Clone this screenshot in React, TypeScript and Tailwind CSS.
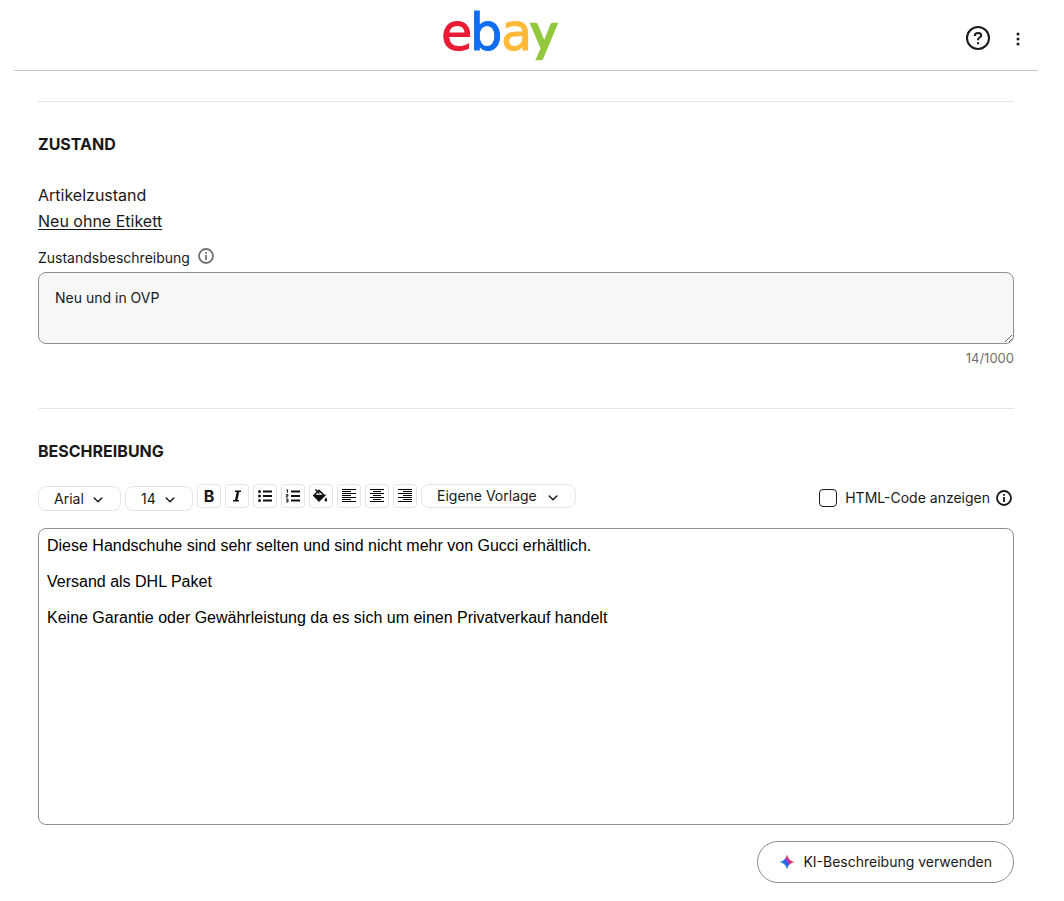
import React from "react";
import clsx from "clsx";

const DESCRIPTION = [
  "Diese Handschuhe sind sehr selten und sind nicht mehr von Gucci erhältlich.",
  "Versand als DHL Paket",
  "Keine Garantie oder Gewährleistung da es sich um einen Privatverkauf handelt",
].join("\n\n");

const MAX_CONDITION = 1000;

export default function App() {
  return (
    <div className="bg-white pr-[26px] pb-4 pl-[14px] font-['Inter',sans-serif] text-[#191919]">
      <Header />
      <main className="px-6">
        <ConditionSection />
        <DescriptionSection />
      </main>
    </div>
  );
}

function Header() {
  return (
    <header className="grid h-[71px] grid-cols-[1fr_auto_1fr] items-center border-b border-[#c7c7c7]">
      <a href="#" className="col-start-2 mr-12 block" aria-label="eBay">
        <Logo />
      </a>
      <div className="flex items-center justify-end gap-5 pt-1.5 pr-3">
        <button type="button" aria-label="Hilfe"><HelpIcon /></button>
        <button type="button" aria-label="Mehr" className="w-4 pt-0.5"><KebabIcon /></button>
      </div>
    </header>
  );
}

function ConditionSection() {
  const [text, setText] = React.useState("Neu und in OVP");

  return (
    <Section title="ZUSTAND" className="mt-[30px]">
      <div className="mt-[26px] text-base leading-[26px]">
        <p>Artikelzustand</p>
        <a href="#" className="underline underline-offset-2">Neu ohne Etikett</a>
      </div>
      <div className="mt-[14px] flex items-center gap-2 text-sm leading-5">
        <label htmlFor="condition">Zustandsbeschreibung</label>
        <button type="button" aria-label="Info" className="pb-1 text-[#707070]"><InfoIcon /></button>
      </div>
      <textarea
        id="condition" value={text} maxLength={MAX_CONDITION}
        onChange={(e) => setText(e.target.value)}
        className="mt-1 block h-[72px] w-full resize-y rounded-lg border border-[#8f8f8f] bg-[#f7f7f7] px-4 py-[15px] text-sm leading-5"
      />
      <p className="mt-1 text-right text-[13px] leading-5 text-[#707070]">{text.length}/{MAX_CONDITION}</p>
    </Section>
  );
}

function DescriptionSection() {
  const [html, setHtml] = React.useState(false);

  return (
    <Section title="BESCHREIBUNG" className="mt-10">
      <div className="mt-[21px] flex items-start justify-between">
        <div className="flex items-start gap-1">
          <Dropdown label="Schriftart" className="mt-0.5 h-[25px] w-[83px]" options={["Arial", "Times", "Courier"]} />
          <Dropdown label="Schriftgröße" className="mt-0.5 h-[25px] w-[68px]" options={["14", "18", "24"]} />
          <ToolButton label="Fett"><span className="text-base leading-none font-bold">B</span></ToolButton>
          <ToolButton label="Kursiv"><ItalicIcon /></ToolButton>
          <ToolButton label="Aufzählung"><BulletsIcon /></ToolButton>
          <ToolButton label="Nummerierung"><NumbersIcon /></ToolButton>
          <ToolButton label="Farbe"><FillIcon /></ToolButton>
          <ToolButton label="Linksbündig"><AlignIcon widths={[14, 9]} align="left" /></ToolButton>
          <ToolButton label="Zentriert"><AlignIcon widths={[14, 8]} align="center" /></ToolButton>
          <ToolButton label="Rechtsbündig"><AlignIcon widths={[14, 9]} align="right" /></ToolButton>
          <Dropdown label="Vorlage" className="h-6 w-[155px]" options={["Eigene Vorlage"]} />
        </div>
        <div className="flex items-center pt-1 pr-0.5">
          <input
            id="html" type="checkbox" checked={html} onChange={(e) => setHtml(e.target.checked)}
            className="mr-2 size-[18px] appearance-none rounded-[4px] border border-[#191919] checked:bg-[#191919]"
          />
          <label htmlFor="html" className="text-sm leading-5">HTML-Code anzeigen</label>
          <button type="button" aria-label="Info" className="ml-1.5"><InfoIcon /></button>
        </div>
      </div>
      <textarea
        aria-label="Beschreibung" defaultValue={DESCRIPTION}
        className="mt-[17px] block h-[297px] w-full resize-none rounded-lg border border-[#8f8f8f] bg-white p-2 font-['Liberation_Sans',Arial,sans-serif] text-base leading-[18px] text-black"
      />
      <div className="mt-4 flex justify-end">
        <button type="button" className="flex h-[42px] items-center gap-2 rounded-full border border-[#8f8f8f] px-[21px] text-sm">
          <SparkIcon />KI-Beschreibung verwenden
        </button>
      </div>
    </Section>
  );
}

function Section({ title, className, children }: { title: string; className?: string; children: React.ReactNode }) {
  return (
    <section className={clsx("border-t border-[#e5e5e5] pt-[30px]", className)}>
      <h2 className="text-base leading-6 font-bold">{title}</h2>
      {children}
    </section>
  );
}

function Dropdown({ label, options, className }: { label: string; options: string[]; className?: string }) {
  return (
    <div className={clsx("relative", className)}>
      <select aria-label={label} className="block h-full w-full appearance-none rounded-lg border border-[#e5e5e5] bg-white pl-[15px] text-sm leading-5">
        {options.map((o) => <option key={o}>{o}</option>)}
      </select>
      <svg viewBox="0 0 10 6" className="pointer-events-none absolute top-[11px] right-[18px] h-1.5 w-2.5" fill="none" stroke="#191919" strokeWidth="1.5" strokeLinecap="round">
        <path d="M1.200 1L5 4.800 8.800 1" />
      </svg>
    </div>
  );
}

function ToolButton({ label, children }: { label: string; children: React.ReactNode }) {
  return (
    <button type="button" aria-label={label} className="flex size-6 items-center justify-center rounded border border-[#e5e5e5] bg-white">
      {children}
    </button>
  );
}

/* ---- icons ---- */

function Logo() {
  return (
    <svg className="block" width="124" height="70" viewBox="0 0 124 70" fontFamily="DejaVu Sans, sans-serif" fontSize="51" strokeWidth="1">
      <text x="1" y="50" fill="#e81c35" stroke="#e81c35">e</text>
      <text x="30" y="50" fill="#0f6df2" stroke="#0f6df2">b</text>
      <text x="61" y="50" fill="#ffb938" stroke="#ffb938">a</text>
      <text x="91" y="50" fill="#93c83d" stroke="#93c83d" strokeWidth="2.5" fontFamily="Lato, sans-serif" fontSize="50">y</text>
    </svg>
  );
}

function HelpIcon() {
  return (
    <svg className="block" width="24" height="24" viewBox="0 0 24 24" fill="none" stroke="currentColor" strokeWidth="2">
      <circle cx="12" cy="12" r="11" />
      <path d="M8.9 10V9.4C8.9 7.9 10.1 7 12 7s3.2.9 3.2 2.4c0 2.2-3.2 2-3.2 4.4v.4" />
      <path d="M12 16.2v2" />
    </svg>
  );
}

function KebabIcon() {
  return (
    <svg className="block" width="16" height="16" viewBox="0 0 16 16" fill="currentColor">
      <circle cx="8" cy="3" r="1.5" />
      <circle cx="8" cy="8" r="1.5" />
      <circle cx="8" cy="13" r="1.5" />
    </svg>
  );
}

function InfoIcon() {
  return (
    <svg className="block" width="16" height="16" viewBox="0 0 16 16" fill="none" stroke="currentColor" strokeWidth="1.8">
      <circle cx="8" cy="8" r="7" />
      <path d="M8 7v5M8 4v1.8" />
    </svg>
  );
}

function ItalicIcon() {
  return (
    <svg width="12" height="12" viewBox="0 0 12 12" fill="none" stroke="#111">
      <path d="M4 1.2h6M2 10.8h6" strokeWidth="1.6" />
      <path d="M7.2 1L5 11" strokeWidth="2.4" />
    </svg>
  );
}

function BulletsIcon() {
  return (
    <svg width="16" height="14" viewBox="0 0 16 14" fill="#111">
      <circle cx="2.5" cy="2.5" r="1.5" />
      <circle cx="2.5" cy="7" r="1.5" />
      <circle cx="2.5" cy="11.5" r="1.5" />
      <path d="M6 1.5h9v2H6zM6 6h9v2H6zM6 10.5h9v2H6z" />
    </svg>
  );
}

function NumbersIcon() {
  return (
    <svg width="16" height="14" viewBox="0 0 16 14" fill="#111">
      <path d="M6 1.5h9v2H6zM6 6h9v2H6zM6 10.5h9v2H6z" />
      <path d="M1.3 1.3l1.2-.6v3.1M1 5.6h2v1.2H1.3v1.3h1.9M1 10h2v3H1M1.4 11.5H3" fill="none" stroke="#111" strokeWidth="0.9" />
    </svg>
  );
}

function FillIcon() {
  return (
    <svg width="16" height="16" viewBox="0 0 16 16" fill="none" stroke="#111" strokeWidth="1.5">
      <path d="M1.2 7.2L6 2.4l5 4.8-5 5z" />
      <path d="M.8 7.4h10.8L6 13z" fill="#111" />
      <path d="M2.4 1.4l4 4.2" />
      <path d="M12.9 9.6c.9 1.2 1.3 1.9 1.3 2.6a1.3 1.3 0 0 1-2.6 0c0-.7.4-1.4 1.3-2.6z" fill="#111" stroke="none" />
    </svg>
  );
}

// alternating long and short rules, seven rows
function AlignIcon({ widths, align }: { widths: [number, number]; align: "left" | "center" | "right" }) {
  return (
    <svg width="14" height="14" viewBox="0 0 14 14" fill="#000" shapeRendering="crispEdges">
      {[0, 1, 2, 3, 4, 5, 6].map((i) => {
        const w = widths[i % 2];
        const x = align === "left" ? 0 : align === "right" ? 14 - w : (14 - w) / 2;
        return <rect key={i} x={x} y={i * 2} width={w} height="1" />;
      })}
    </svg>
  );
}

function SparkIcon() {
  return (
    <svg width="16" height="16" viewBox="0 0 16 16">
      <defs>
        <linearGradient id="spark" x1="0.2" x2="0.8" y1="0.7" y2="0.3">
          <stop offset="0.1" stopColor="#1a8fd0" />
          <stop offset="0.4" stopColor="#2a62ee" />
          <stop offset="0.6" stopColor="#a03cc0" />
          <stop offset="0.85" stopColor="#f02d50" />
        </linearGradient>
        {/* tips fade to green on the left and bottom, orange on the top and right */}
        <radialGradient id="spark-cool" cx="11" cy="5" r="11" gradientUnits="userSpaceOnUse">
          <stop offset="0.75" stopColor="#4fd468" stopOpacity="0" />
          <stop offset="1" stopColor="#4fd468" />
        </radialGradient>
        <radialGradient id="spark-warm" cx="5" cy="11" r="11" gradientUnits="userSpaceOnUse">
          <stop offset="0.75" stopColor="#ff9a30" stopOpacity="0" />
          <stop offset="1" stopColor="#ff9a30" />
        </radialGradient>
      </defs>
      {["url(#spark)", "url(#spark-cool)", "url(#spark-warm)"].map((fill) => (
        <path key={fill} d="M8 .8c.9 3.8 3.400 6.300 7.200 7.200-3.800.9-6.300 3.400-7.200 7.200C7.100 11.400 4.600 8.900.8 8 4.600 7.100 7.100 4.600 8 .8z" fill={fill} />
      ))}
    </svg>
  );
}
